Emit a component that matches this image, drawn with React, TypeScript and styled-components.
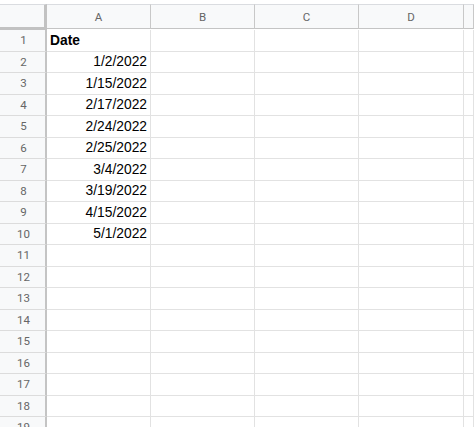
import styled, { createGlobalStyle } from "styled-components";

const GlobalStyle = createGlobalStyle`
  html, body {
    margin: 0;
    padding: 0;
    background: #fff;
    overflow: hidden;
  }
`;

const COLUMNS = ["A", "B", "C", "D", ""];
const DATA: Record<number, { text: string; bold?: boolean }> = {
  1: { text: "Date", bold: true },
  2: { text: "1/2/2022" },
  3: { text: "1/15/2022" },
  4: { text: "2/17/2022" },
  5: { text: "2/24/2022" },
  6: { text: "2/25/2022" },
  7: { text: "3/4/2022" },
  8: { text: "3/19/2022" },
  9: { text: "4/15/2022" },
  10: { text: "5/1/2022" },
};
const ROWS = Array.from({ length: 20 }, (_, i) => i + 1);

const Sheet = styled.div`
  width: 474px;
  height: 427px;
  overflow: hidden;
  padding-top: 4px;
  box-sizing: border-box;
`;

const Grid = styled.div`
  display: grid;
  grid-template-columns: 47px 104px 104px 104px 105px 1fr;
  grid-template-rows: 26px;
  grid-auto-rows: 21.5px;
`;

const Corner = styled.div`
  background: #f8f9fa;
  box-sizing: border-box;
  border-top: 1px solid #dadce0;
  border-right: 3px solid #c2c2c2;
  border-bottom: 3px solid #c2c2c2;
`;

const ColHead = styled.div`
  background: #f8f9fa;
  box-sizing: border-box;
  border-top: 1px solid #dadce0;
  border-right: 1px solid #c8c8c8;
  border-bottom: 1px solid #c4c4c4;
  margin-bottom: 1px;
  display: flex;
  align-items: center;
  justify-content: center;
  font-family: Roboto, "Liberation Sans", sans-serif;
  font-size: 11.5px;
  color: #666;
`;

const RowHead = styled.div`
  background: #f8f9fa;
  box-sizing: border-box;
  border-right: 2px solid #c4c4c4;
  border-bottom: 1px solid #dcdcdc;
  display: flex;
  align-items: center;
  justify-content: center;
  padding-left: 2px;
  font-family: Roboto, "Liberation Sans", sans-serif;
  font-size: 11.5px;
  color: #666;
`;

const Cell = styled.div<{ $bold?: boolean }>`
  box-sizing: border-box;
  border-right: 1px solid #e2e2e2;
  border-bottom: 1px solid #e2e2e2;
  display: flex;
  align-items: center;
  justify-content: ${(p) => (p.$bold ? "flex-start" : "flex-end")};
  padding: 0 3px;
  font-family: "Liberation Sans", Arial, sans-serif;
  font-size: 13.8px;
  font-weight: ${(p) => (p.$bold ? 700 : 400)};
  color: #000;
  white-space: nowrap;
  overflow: hidden;
`;

export default function App() {
  return (
    <>
      <GlobalStyle />
      <Sheet>
        <Grid>
          <Corner />
          {COLUMNS.map((c, i) => (
            <ColHead key={i}>{c}</ColHead>
          ))}
          {ROWS.map((r) => (
            <Row key={r} n={r} />
          ))}
        </Grid>
      </Sheet>
    </>
  );
}

function Row({ n }: { n: number }) {
  const d = DATA[n];
  return (
    <>
      <RowHead>{n}</RowHead>
      <Cell $bold={d?.bold}>{d?.text}</Cell>
      <Cell />
      <Cell />
      <Cell />
      <Cell />
    </>
  );
}
